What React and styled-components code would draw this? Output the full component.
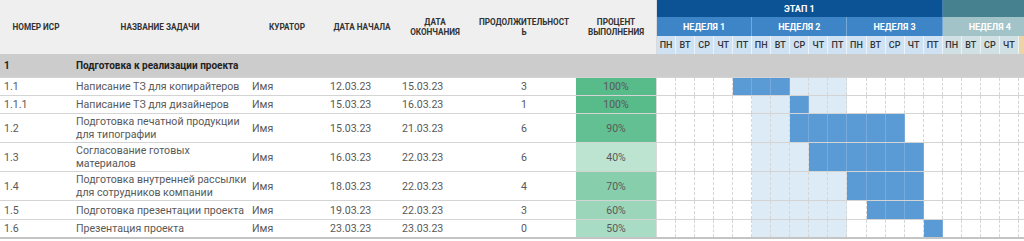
import React from "react";
import styled, { createGlobalStyle } from "styled-components";

const GlobalStyle = createGlobalStyle`
  html, body {
    margin: 0;
    padding: 0;
    background: #ffffff;
    font-family: Roboto, "Liberation Sans", Arial, sans-serif;
  }
`;

// Shared column template: info columns + 20 day columns
const COLUMNS = "72px 176px 78px 72px 74px 104px 81px repeat(20, 19.05px)";

const Sheet = styled.div`
  width: 1024px;
  height: 241px;
  overflow: hidden;
  background: #ffffff;
`;

const Header = styled.div`
  display: grid;
  grid-template-columns: ${COLUMNS};
  grid-template-rows: 17px 19px 18px;
  background: #efefef;
`;

const HeadLabel = styled.div`
  grid-row: 1 / 4;
  display: flex;
  align-items: center;
  justify-content: center;
  text-align: center;
  font-size: 8.2px;
  line-height: 10px;
  font-weight: 700;
  color: #333333;
  text-transform: uppercase;
  border-right: ${(p) => (p.$last ? "1px solid #dadada" : "none")};
`;

const Stage = styled.div`
  grid-row: 1;
  grid-column: span ${(p) => p.$span};
  background: ${(p) => p.$bg};
  color: #ffffff;
  font-size: 9px;
  font-weight: 700;
  display: flex;
  align-items: center;
  justify-content: center;
  border-right: 1px solid rgba(255, 255, 255, 0.25);
`;

const Week = styled.div`
  grid-row: 2;
  grid-column: span ${(p) => p.$span};
  background: ${(p) => p.$bg};
  color: #ffffff;
  font-size: 9px;
  font-weight: 700;
  display: flex;
  align-items: center;
  justify-content: center;
  border-right: 1px solid rgba(255, 255, 255, 0.3);
  box-sizing: border-box;
`;

const Day = styled.div`
  grid-row: 3;
  background: ${(p) => p.$bg};
  color: #333333;
  font-size: 9px;
  font-weight: 500;
  display: flex;
  align-items: center;
  justify-content: center;
  border-right: 1px solid rgba(255, 255, 255, 0.6);
  box-sizing: border-box;
`;

const Row = styled.div`
  display: grid;
  grid-template-columns: ${COLUMNS};
  height: ${(p) => p.$h}px;
  box-sizing: border-box;
  border-bottom: ${(p) => (p.$last ? "2px solid #c4c4c4" : "1px solid #d4d4d4")};
  background: ${(p) => (p.$section ? "#cccccc" : "#ffffff")};
  font-size: ${(p) => (p.$section ? "10px" : "10.6px")};
  font-weight: ${(p) => (p.$section ? 700 : 400)};
  color: ${(p) => (p.$section ? "#222222" : "#595959")};
`;

const Cell = styled.div`
  grid-column: span ${(p) => p.$span || 1};
  display: flex;
  flex-direction: column;
  justify-content: center;
  align-items: ${(p) => (p.$center ? "center" : "flex-start")};
  padding-left: ${(p) => (p.$center ? 0 : 4)}px;
  line-height: 13px;
  white-space: nowrap;
  min-width: 0;
`;

const Percent = styled.div`
  display: flex;
  align-items: center;
  justify-content: center;
  background: ${(p) => p.$bg};
  color: #595959;
  font-size: 10.5px;
  border-right: 1px solid #dadada;
`;

const GanttCell = styled.div`
  box-sizing: border-box;
  background: ${(p) =>
    p.$state === "dark" ? "#5b9bd5" : p.$state === "light" ? "#ddebf7" : "transparent"};
  border-right: 1px ${(p) => (p.$state === "dark" ? "solid #78aadb" : "dashed #d6d6d6")};
`;

const DAYS = ["ПН", "ВТ", "СР", "ЧТ", "ПТ"];

const days = [];
for (let w = 0; w < 4; w++) {
  DAYS.forEach((d, i) => {
    let bg = "#cfe2f3";
    if (w === 3) bg = i === 4 ? "#eed3a8" : "#d0e0e3";
    // the last day sits mostly past the window edge, only its colour shows
    days.push({ label: w === 3 && i === 4 ? "" : d, bg, key: `${w}-${i}` });
  });
}

const tasks = [
  { id: "1.1", name: ["Написание ТЗ для копирайтеров"], start: "12.03.23", end: "15.03.23", dur: 3, pct: 100, bg: "#57bb8a", h: 18, bar: [4, 6] },
  { id: "1.1.1", name: ["Написание ТЗ для дизайнеров"], start: "15.03.23", end: "16.03.23", dur: 1, pct: 100, bg: "#57bb8a", h: 18, bar: [7, 7] },
  { id: "1.2", name: ["Подготовка печатной продукции", "для типографии"], start: "15.03.23", end: "21.03.23", dur: 6, pct: 90, bg: "#63c093", h: 29, bar: [7, 12] },
  { id: "1.3", name: ["Согласование готовых", "материалов"], start: "16.03.23", end: "22.03.23", dur: 6, pct: 40, bg: "#bce4d0", h: 29, bar: [8, 13] },
  { id: "1.4", name: ["Подготовка внутренней рассылки", "для сотрудников компании"], start: "18.03.23", end: "22.03.23", dur: 4, pct: 70, bg: "#87ceac", h: 29, bar: [10, 13] },
  { id: "1.5", name: ["Подготовка презентации проекта"], start: "19.03.23", end: "22.03.23", dur: 3, pct: 60, bg: "#9cd6ba", h: 19, bar: [11, 13] },
  { id: "1.6", name: ["Презентация проекта"], start: "23.03.23", end: "23.03.23", dur: 0, pct: 50, bg: "#a9dcc4", h: 19, bar: [14, 14] },
];

const cellState = (bar, i) => {
  if (i >= bar[0] && i <= bar[1]) return "dark";
  if (i >= 5 && i <= 9) return "light";
  return "none";
};

const App = () => (
  <>
    <GlobalStyle />
    <Sheet>
      <Header>
        <HeadLabel>Номер ИСР</HeadLabel>
        <HeadLabel>Название задачи</HeadLabel>
        <HeadLabel>Куратор</HeadLabel>
        <HeadLabel>Дата начала</HeadLabel>
        <HeadLabel>
          Дата
          <br />
          окончания
        </HeadLabel>
        <HeadLabel>
          Продолжительност
          <br />ь
        </HeadLabel>
        <HeadLabel $last>
          Процент
          <br />
          выполнения
        </HeadLabel>
        <Stage $span={15} $bg="#0b5394">ЭТАП 1</Stage>
        <Stage $span={5} $bg="#45818e" />
        <Week $span={5} $bg="#3d85c6">НЕДЕЛЯ 1</Week>
        <Week $span={5} $bg="#3d85c6">НЕДЕЛЯ 2</Week>
        <Week $span={5} $bg="#3d85c6">НЕДЕЛЯ 3</Week>
        <Week $span={5} $bg="#a2c4c9">НЕДЕЛЯ 4</Week>
        {days.map((d) => (
          <Day key={d.key} $bg={d.bg}>
            {d.label}
          </Day>
        ))}
      </Header>

      <Row $h={24} $section>
        <Cell>1</Cell>
        <Cell $span={6}>Подготовка к реализации проекта</Cell>
      </Row>

      {tasks.map((t, idx) => (
        <Row key={t.id} $h={t.h} $last={idx === tasks.length - 1}>
          <Cell>{t.id}</Cell>
          <Cell>
            {t.name.map((line) => (
              <span key={line}>{line}</span>
            ))}
          </Cell>
          <Cell>Имя</Cell>
          <Cell>{t.start}</Cell>
          <Cell>{t.end}</Cell>
          <Cell $center>{t.dur}</Cell>
          <Percent $bg={t.bg}>{t.pct}%</Percent>
          {days.map((d, i) => (
            <GanttCell key={d.key} $state={cellState(t.bar, i)} />
          ))}
        </Row>
      ))}
    </Sheet>
  </>
);

export default App;
